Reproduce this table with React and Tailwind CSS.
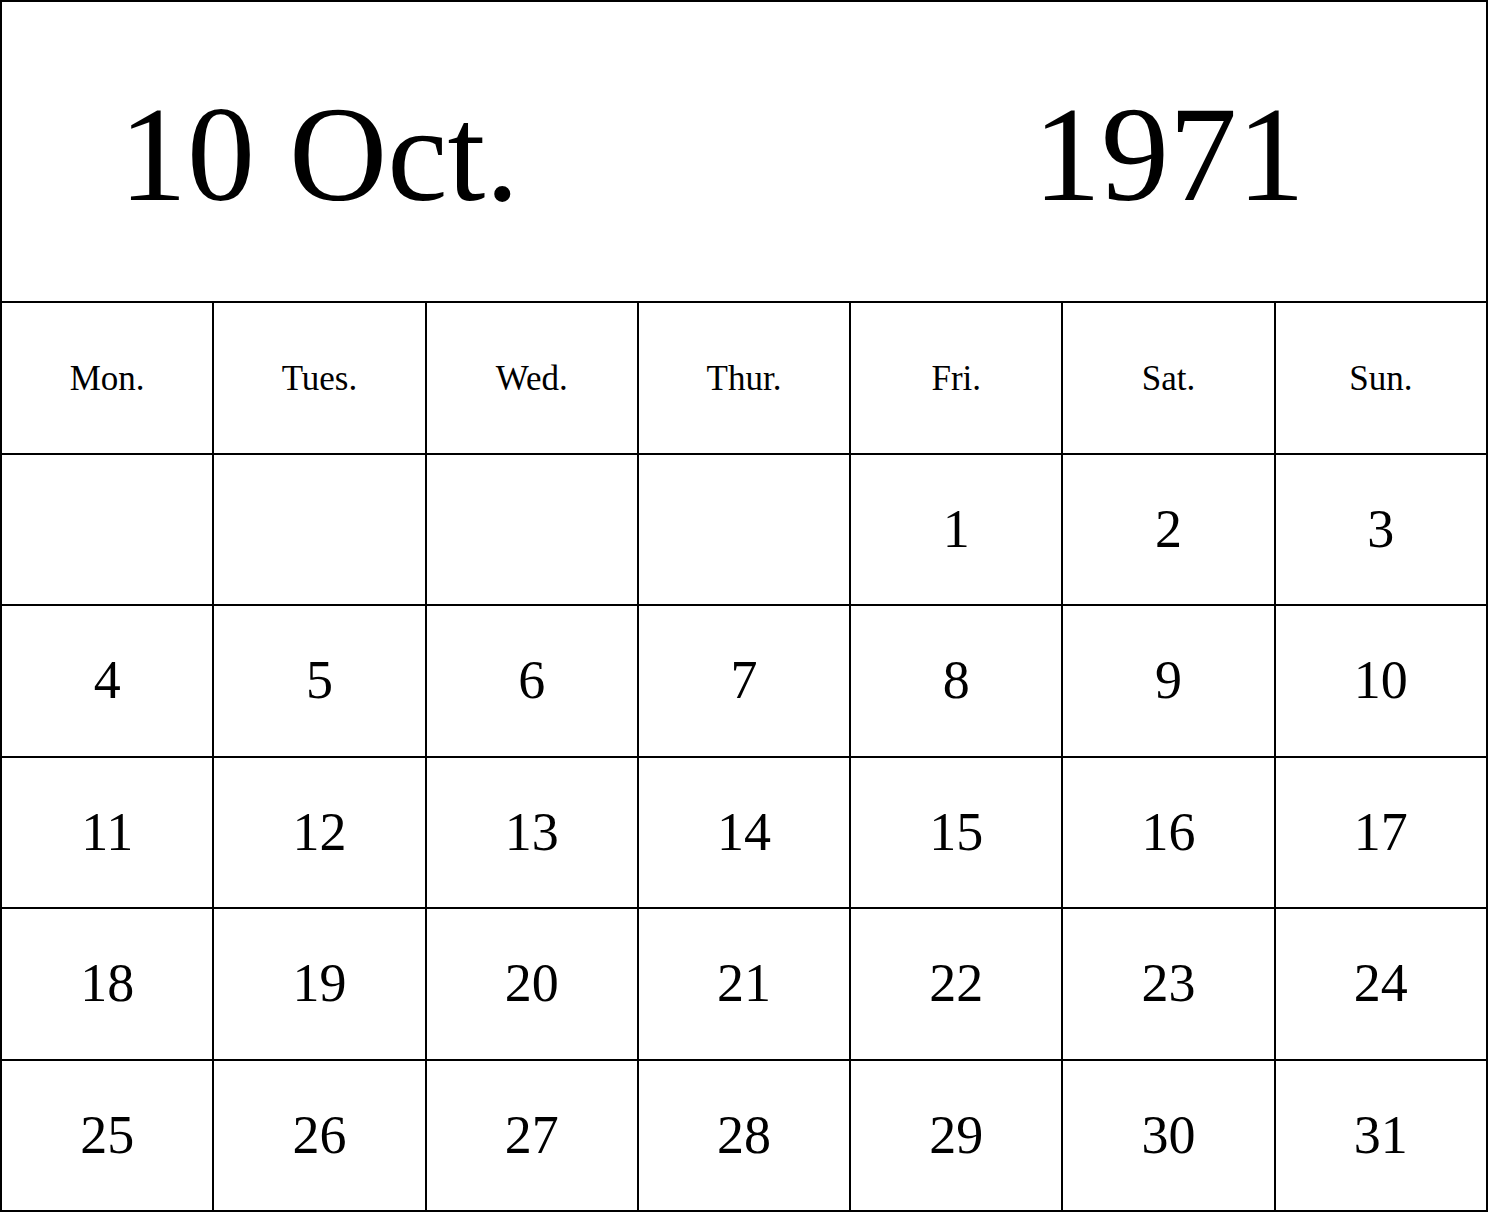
import React from 'react';

const days = ['Mon.', 'Tues.', 'Wed.', 'Thur.', 'Fri.', 'Sat.', 'Sun.'];

// October 1971 starts on a Friday
const cells = [
  ...Array(4).fill(''),
  ...Array.from({ length: 31 }, (_, i) => String(i + 1)),
];

export default function App() {
  return (
    <div
      className="w-[1488px] h-[1212px] bg-white text-black border-l-2 border-t-2 border-black flex flex-col"
      style={{ fontFamily: '"Liberation Serif", "Times New Roman", serif' }}
    >
      <div className="h-[301px] shrink-0 border-r-2 border-b-2 border-black flex items-center pt-[5px] pl-[117px] text-[136px] leading-none">
        <span className="w-[914px] shrink-0">10 Oct.</span>
        <span>1971</span>
      </div>
      <div className="grid grid-cols-7 grid-rows-6 flex-1">
        {days.map((d) => (
          <div
            key={d}
            className="border-r-2 border-b-2 border-black flex items-center justify-center pt-[3px] text-[35px]"
          >
            {d}
          </div>
        ))}
        {cells.map((c, i) => (
          <div
            key={i}
            className="border-r-2 border-b-2 border-black flex items-center justify-center text-[54px]"
          >
            {c}
          </div>
        ))}
      </div>
    </div>
  );
}
